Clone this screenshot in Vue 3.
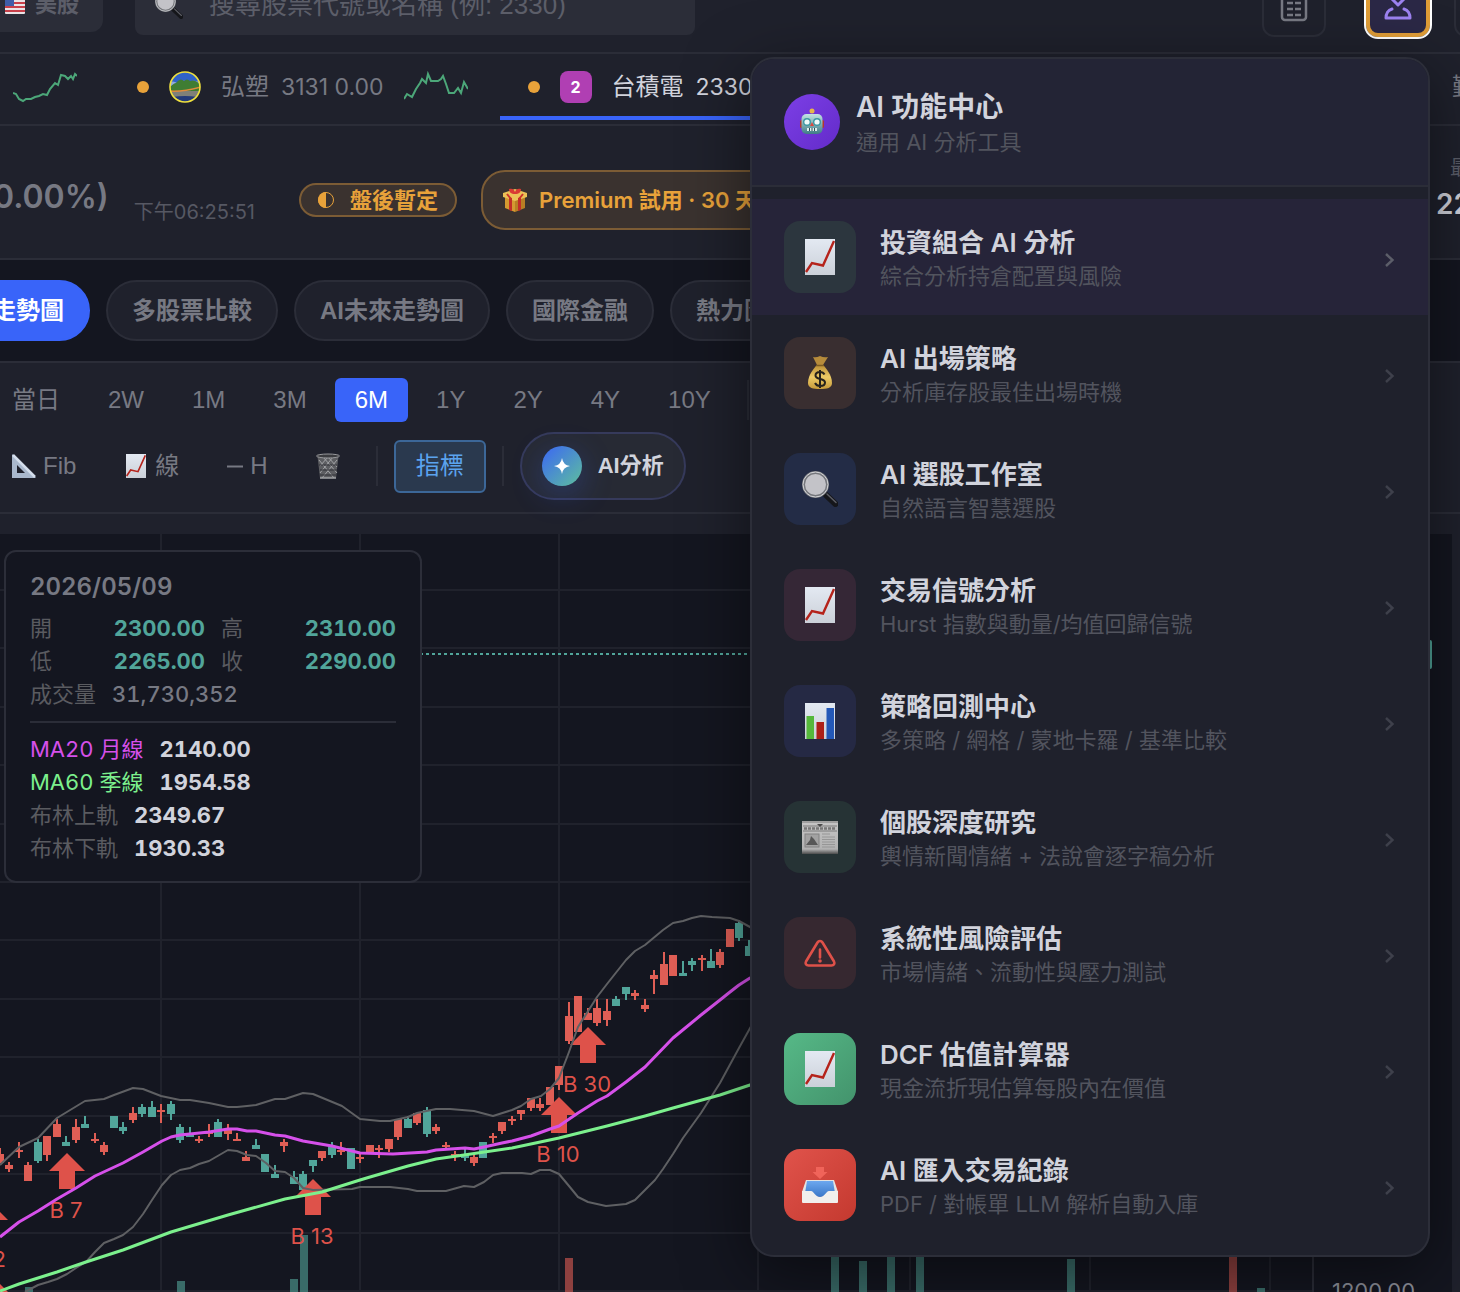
<template>
    <div class="app">
        <!-- shared icon shapes -->
        <svg class="sprite" width="0" height="0" aria-hidden="true">
            <defs>
                <linearGradient id="paper" x1="0" y1="0" x2="0" y2="1">
                    <stop offset="0" stop-color="#e3e9f2" />
                    <stop offset="1" stop-color="#cbd0d8" />
                </linearGradient>
                <linearGradient id="steel" x1="0" y1="0" x2="0" y2="1">
                    <stop offset="0" stop-color="#c3e4e4" />
                    <stop offset="1" stop-color="#3f7c86" />
                </linearGradient>
                <linearGradient id="gold" x1="0" y1="0" x2="0" y2="1">
                    <stop offset="0" stop-color="#b98d35" />
                    <stop offset="0.5" stop-color="#edcb66" />
                    <stop offset="1" stop-color="#c79a3a" />
                </linearGradient>
                <linearGradient id="news" x1="0" y1="0" x2="0" y2="1">
                    <stop offset="0" stop-color="#c6c6c6" />
                    <stop offset="0.85" stop-color="#b2b2b2" />
                    <stop offset="1" stop-color="#4c4c4c" />
                </linearGradient>
                <linearGradient id="tray" x1="0" y1="0" x2="0" y2="1">
                    <stop offset="0" stop-color="#6da8ef" />
                    <stop offset="1" stop-color="#3a77c8" />
                </linearGradient>
            </defs>
            <symbol id="i-trend" viewBox="0 0 36 36">
                <rect x="3" y="0" width="30" height="36" fill="url(#paper)" />
                <path d="M4 33 10 24 21 26.500 32 2" fill="none" stroke="#b5231b" stroke-width="2.400" />
            </symbol>
            <symbol id="i-money" viewBox="0 0 36 36">
                <path d="M11 2q3 1 7-1 4 2 8 1l-5 8h-6z" fill="#b68b3b" />
                <path d="M15 10h6c3 3 9 10 9 18 0 5-5 6-12 6S6 33 6 28c0-8 6-15 9-18z" fill="url(#gold)" />
                <path d="M14 10.500h8" stroke="#7d5c22" stroke-width="1.500" />
                <path d="M22.500 19.500c-1-2-2.500-2.500-4.500-2.500-3 0-4.500 1.500-4.500 3.500 0 4.500 9.500 2.500 9.500 7 0 2-2 3.500-5 3.500-2.500 0-4-1-5-3M18 15v18" fill="none" stroke="#26221c" stroke-width="2" />
            </symbol>
            <symbol id="i-search" viewBox="0 0 36 36">
                <path d="m24 24 9.500 9" stroke="#15161a" stroke-width="6" stroke-linecap="round" />
                <path d="m25 23 9 8.500" stroke="#5b5d64" stroke-width="1.500" stroke-linecap="round" />
                <circle cx="13.500" cy="13.500" r="12" fill="#c3c3c8" stroke="#75777c" stroke-width="3" />
                <circle cx="13.500" cy="13.500" r="12.500" fill="none" stroke="#d5d6d9" stroke-width="1" />
            </symbol>
            <symbol id="i-bars" viewBox="0 0 36 36">
                <rect x="3" y="0" width="30" height="36" fill="url(#paper)" />
                <rect x="4.500" y="13" width="7.500" height="23" fill="#55b83b" />
                <rect x="14.500" y="19" width="7.500" height="17" fill="#ad2019" />
                <rect x="24.500" y="5" width="7.500" height="31" fill="#2458b8" />
            </symbol>
            <symbol id="i-news" viewBox="0 0 36 36">
                <rect x="0" y="2" width="36" height="33" fill="url(#news)" />
                <path d="M0 3h36M1 7h34M1 12h34" stroke="#7b7b7b" />
                <path d="M2 9.500h32" stroke="#777" stroke-width="2.500" stroke-dasharray="3 1" />
                <path d="m15 5 3 3 3-3z" fill="#4a4a4a" />
                <rect x="3" y="15" width="14" height="13" fill="#a2a2a2" stroke="#828282" />
                <path d="m4 26 4-5 1-4 3 3 4 6z" fill="#575757" />
                <path d="M20 15h8M20 18h13M20 20.500h13M20 23h13M20 25.500h13M20 28h13" stroke="#969696" />
            </symbol>
            <symbol id="i-warn" viewBox="0 0 36 36">
                <path d="M15.500 7.500 4 26.500c-1.200 2.200.2 4 2.500 4h23c2.300 0 3.700-1.800 2.500-4L20.500 7.500c-1.200-2-3.800-2-5 0zM18 14.500v8" fill="none" stroke="#df5149" stroke-width="2.600" stroke-linecap="round" stroke-linejoin="round" />
                <circle cx="18" cy="26" r="1.800" fill="#df5149" />
            </symbol>
            <symbol id="i-inbox" viewBox="0 0 36 36">
                <path d="M14 0h8v5h3.500L18 12l-7.500-7H14z" fill="#f0645a" />
                <path d="M4 13h28l4 12H0z" fill="#e5e4e2" />
                <path d="M5 14h26l2 12q-15 8-30 0z" fill="url(#tray)" />
                <path d="M0 24h9c3 0 4 6 9 6s6-6 9-6h9v11q0 1-1 1H1q-1 0-1-1z" fill="#f1efed" />
            </symbol>
            <symbol id="i-robot" viewBox="0 0 28 28">
                <rect x="2" y="12" width="3" height="8" rx="1.500" fill="#b3372f" />
                <rect x="23" y="12" width="3" height="8" rx="1.500" fill="#b3372f" />
                <circle cx="14" cy="3" r="2.500" fill="#e8b64a" />
                <rect x="3.500" y="6" width="21" height="20" rx="5" fill="url(#steel)" />
                <circle cx="9" cy="14" r="3.300" fill="#eefafa" stroke="#3c98a3" stroke-width="1.400" />
                <circle cx="19" cy="14" r="3.300" fill="#eefafa" stroke="#3c98a3" stroke-width="1.400" />
                <path d="m14 14 2 4h-4z" fill="#d9483e" />
                <rect x="9" y="20" width="10" height="3" fill="#dff0ef" />
                <path d="M11.500 20v3M14 20v3M16.500 20v3" stroke="#2c4f55" />
            </symbol>
            <symbol id="i-gift" viewBox="0 0 24 24">
                <path d="m2 8 10 4v12L2 20z" fill="#d49a31" />
                <path d="m22 8-10 4v12l10-4z" fill="#b97f24" />
                <path d="m0 5 12-4 12 4v4l-12 4L0 9z" fill="#ecc157" />
                <path d="m6 9 3 1v13l-3-1zM15 10l3-1v13l-3 1z" fill="#c22e28" />
                <path d="M12 6C8 6 6 4 6 1c3-1 5 0 6 3 1-3 3-4 6-3 0 3-2 5-6 5z" fill="#d93a34" />
                <path d="M4 6l4 5M20 6l-4 5" stroke="#cb302a" stroke-width="2" />
            </symbol>
            <symbol id="i-flag" viewBox="0 0 20 18">
                <rect width="20" height="17" y="1" rx="1" fill="#e9e4e6" />
                <path d="M0 3h20M0 7h20M0 11h20M0 15h20" stroke="#c8404a" stroke-width="2" />
                <rect width="9" height="9" y="1" fill="#3f5ea8" />
            </symbol>
            <symbol id="i-ruler" viewBox="0 0 24 24">
                <path d="M0 0v24h24zM5 11v8h8z" fill="#a9b8cd" fill-rule="evenodd" />
                <path d="m1 1 22 22" stroke="#d5dfed" stroke-width="2.500" />
            </symbol>
            <symbol id="i-trash" viewBox="0 0 24 26">
                <path d="M1.500 3h21L20 25H4z" fill="#5d5e62" />
                <path d="m3 7 15 18M7 4l14 16M12 4l9 10M21 7 6 25M17 4 4 20M12 4 4 13" stroke="#a2a3a6" stroke-width="1" />
                <path d="M3 12h18M4 17h17M4 22h16" stroke="#303136" stroke-width="1" />
                <ellipse cx="12" cy="3" rx="11.500" ry="2" fill="#3b3c40" stroke="#98999c" />
                <path d="M4 25h16" stroke="#a2a3a6" stroke-width="1.500" />
            </symbol>
        </svg>

        <header class="topbar">
            <button class="market">
                <svg width="20" height="18"><use href="#i-flag" /></svg>
                美股
            </button>
            <div class="search">
                <label for="q" aria-label="搜尋"><svg width="28" height="28"><use href="#i-search" /></svg></label>
                <input id="q" type="text" placeholder="搜尋股票代號或名稱 (例: 2330)" />
            </div>
            <div class="actions">
                <button class="square" aria-label="報表">
                    <svg width="28" height="34" viewBox="0 0 28 34" fill="none" stroke="#777983">
                        <rect x="2" y="2" width="24" height="30" rx="3" stroke-width="2.500" />
                        <path d="M7 8h14" stroke-width="3" />
                        <path d="M7 15h6M15 15h6M7 21h6M15 21h6M7 27h6M15 27h6" stroke-width="2.600" />
                    </svg>
                </button>
                <button class="square ai" aria-label="AI 功能中心">
                    <svg width="30" height="34" viewBox="0 0 30 34" fill="none" stroke="#9d82f0" stroke-width="3" stroke-linecap="round" stroke-linejoin="round">
                        <path d="m15 4 6 7-6 6-6-6z" />
                        <path d="M9 21c-4 1-6 5-6 9h24c0-4-2-8-6-9" />
                    </svg>
                </button>
                <button class="square" aria-label="設定"></button>
            </div>
        </header>

        <div class="tickers">
            <div class="ticker-group">
                <a v-for="t in tickers" :key="t.id" href="#" class="ticker" :class="{ active: t.active }">
                    <template v-if="t.name">
                        <span class="dot"></span>
                        <span v-if="t.rank" class="rank">{{ t.rank }}</span>
                        <svg v-else width="32" height="32" viewBox="0 0 32 32">
                            <clipPath id="logo-clip"><circle cx="16" cy="16" r="15" /></clipPath>
                            <g clip-path="url(#logo-clip)">
                                <rect width="32" height="32" fill="#2f62c9" />
                                <path d="M0 12q4-3 8 0 6-4 12-1 6-3 12 1v3H0z" fill="#8fa9dc" />
                                <path d="M0 17q5-5 7-5 4-6 8-2 3-3 6 0 6-2 11 5v6H0z" fill="#3f7d33" />
                                <path d="M0 20h32v12H0z" fill="#7f8078" />
                                <path d="M0 20q14 1 32-4" fill="none" stroke="#e08a3b" stroke-width="1.500" />
                                <path d="M3 26q13-2 26 0v6H3z" fill="#233a78" />
                            </g>
                            <circle cx="16" cy="16" r="15" fill="none" stroke="#f0e13e" stroke-width="1.600" />
                        </svg>
                        <span class="ticker-text">{{ t.name }}<span class="quote">{{ t.quote }}</span></span>
                    </template>
                    <svg width="64" height="32" viewBox="0 0 64 32">
                        <polyline :points="t.spark" fill="none" stroke="#4ca779" stroke-width="2" />
                    </svg>
                </a>
            </div>
            <div class="ticker-next">勤誠</div>
        </div>

        <div class="quote-bar">
            <span class="change">(0.00%)</span>
            <span class="time">下午06:25:51</span>
            <span class="session">
                <svg width="16" height="16" viewBox="0 0 16 16">
                    <circle cx="8" cy="8" r="7.500" fill="none" stroke="#e8a23a" />
                    <path d="M8 0a8 8 0 0 0 0 16z" fill="#e8a23a" />
                </svg>
                盤後暫定
            </span>
            <button class="premium">
                <svg width="24" height="24"><use href="#i-gift" /></svg>
                Premium 試用 · 30 天
            </button>
            <div class="stat">
                <span class="stat-label">最高</span>
                <span class="stat-value">2290</span>
            </div>
        </div>

        <nav class="tabs">
            <button v-for="(tab, i) in tabs" :key="tab" class="tab" :class="{ active: i === 0 }">{{ tab }}</button>
        </nav>

        <div class="toolbar">
            <div class="tool-row">
                <button v-for="r in ranges" :key="r" class="tool" :class="{ active: r === '6M' }">{{ r }}</button>
                <span class="divider"></span>
            </div>
            <div class="tool-row">
                <button class="tool"><svg width="24" height="24"><use href="#i-ruler" /></svg>Fib</button>
                <button class="tool"><svg width="24" height="24"><use href="#i-trend" /></svg>線</button>
                <button class="tool"><svg width="16" height="24" viewBox="0 0 16 24"><path d="M0 12.500h16" stroke="#777983" stroke-width="2" /></svg>H</button>
                <button class="tool" aria-label="清除"><svg width="24" height="26"><use href="#i-trash" /></svg></button>
                <span class="divider"></span>
                <button class="indicator">指標</button>
                <span class="divider"></span>
                <button class="ai-pill">
                    <span class="ai-orb">
                        <svg width="16" height="16" viewBox="0 0 16 16"><path d="M8 0q1 7 8 8-7 1-8 8-1-7-8-8 7-1 8-8z" fill="#fff" /></svg>
                    </span>
                    AI分析
                </button>
            </div>
        </div>

        <main class="chart-wrap">
            <div class="chart">
                <svg class="plot" viewBox="0 0 1452 758" preserveAspectRatio="xMinYMin slice">
                    <g stroke="#20222c" stroke-width="2">
                        <line v-for="x in gridX" :key="'x' + x" :x1="x" :x2="x" y1="0" y2="758" />
                        <line v-for="y in gridY" :key="'y' + y" x1="0" x2="1313" :y1="y" :y2="y" />
                    </g>
                    <line x1="1313" x2="1313" y1="0" y2="758" stroke="#2b2d38" stroke-width="2" />

                    <rect v-for="v in volumes" :key="v[0]" :x="v[0]" :y="v[1]" width="8" :height="758 - v[1]" :fill="v[2] === 'g' ? green : red" opacity="0.6" />

                    <g v-for="c in candles" :key="c.x" :fill="c.color">
                        <rect :x="c.x - 1" :y="c.high" width="2" :height="c.low - c.high" />
                        <rect :x="c.x - 4" :y="c.top" width="8" :height="c.bottom - c.top" />
                    </g>

                    <g v-for="m in markers" :key="m.x + '-' + m.y" fill="#de524a">
                        <path :d="`M${m.x} ${m.y}l18 18h-10v18h-16v-18h-10z`" />
                        <text v-if="m.label" :x="m.x - 1" :y="m.y + 65" text-anchor="middle" class="marker">{{ m.label }}</text>
                    </g>

                    <g fill="none" stroke-linejoin="round">
                        <polyline :points="upperBand" stroke="#5f6063" stroke-width="2" />
                        <polyline :points="lowerBand" stroke="#5f6063" stroke-width="2" />
                        <polyline :points="ma60" stroke="#7cf08d" stroke-width="3" />
                        <polyline :points="ma20" stroke="#d650ea" stroke-width="3" />
                    </g>

                    <line x1="420" x2="1313" y1="120" y2="120" :stroke="green" stroke-width="2" stroke-dasharray="3 3" />
                    <rect x="1314" y="106" width="118" height="29" rx="2" :fill="green" />
                    <text x="1332" y="765" class="axis">1200.00</text>
                </svg>

                <section class="legend">
                    <div class="legend-date">2026/05/09</div>
                    <div class="ohlc">
                        <div v-for="o in ohlc" :key="o[0]" class="ohlc-cell">
                            <span class="dim">{{ o[0] }}</span>
                            <span class="up">{{ o[1] }}</span>
                        </div>
                    </div>
                    <div class="legend-row"><span class="dim">成交量</span><span class="volume">31,730,352</span></div>
                    <hr />
                    <div v-for="l in indicators" :key="l.name" class="legend-row">
                        <span :class="l.cls">{{ l.name }}</span>
                        <span class="value">{{ l.value }}</span>
                    </div>
                </section>
            </div>
        </main>

        <!-- AI menu opened from the top bar -->
        <aside class="menu">
            <div class="menu-head">
                <span class="avatar"><svg width="28" height="28"><use href="#i-robot" /></svg></span>
                <div class="item-text">
                    <div class="menu-title">AI 功能中心</div>
                    <div class="menu-sub">通用 AI 分析工具</div>
                </div>
            </div>
            <div class="menu-list">
                <button v-for="item in menu" :key="item.title" class="menu-item" :class="{ hover: item.hover }">
                    <span class="tile" :class="item.tile"><svg width="36" height="36"><use :href="'#i-' + item.icon" /></svg></span>
                    <span class="item-text">
                        <span class="item-title">{{ item.title }}</span>
                        <span class="item-sub">{{ item.sub }}</span>
                    </span>
                    <svg class="arrow" width="12" height="14" viewBox="0 0 12 14">
                        <path d="m2 1 6.500 6L2 13" fill="none" stroke="currentColor" stroke-width="2.400" />
                    </svg>
                </button>
            </div>
        </aside>
    </div>
</template>

<script setup>
import { ref } from 'vue'

const green = '#51a59a'
const red = '#df5e55'

const tickers = ref([
    { id: 1, spark: '0,22 3,23 6,28 10,30 13,28 18,28 22,26 26,25 30,23 34,24 37,18 42,12 45,14 48,4 52,5 55,8 58,5 60,8 62,3 64,5' },
    { id: 2, name: '弘塑', quote: '3131 0.00', spark: '0,28 3,23 8,26 12,18 16,12 18,8 22,12 24,3 27,10 34,10 37,8 39,5 42,13 45,22 50,22 54,17 57,22 60,11 64,18' },
    { id: 3, name: '台積電', quote: '2330 0.00', rank: 2, active: true, spark: '0,24 10,20 20,22 30,14 40,16 50,8 64,10' }
])

const tabs = ['走勢圖', '多股票比較', 'AI未來走勢圖', '國際金融', '熱力圖']
const ranges = ['當日', '2W', '1M', '3M', '6M', '1Y', '2Y', '4Y', '10Y']

const ohlc = [['開', '2300.00'], ['高', '2310.00'], ['低', '2265.00'], ['收', '2290.00']]
const indicators = [
    { name: 'MA20 月線', value: '2140.00', cls: 'ma20' },
    { name: 'MA60 季線', value: '1954.58', cls: 'ma60' },
    { name: '布林上軌', value: '2349.67', cls: 'band' },
    { name: '布林下軌', value: '1930.33', cls: 'band' }
]

const menu = ref([
    { title: '投資組合 AI 分析', sub: '綜合分析持倉配置與風險', icon: 'trend', tile: 'teal', hover: true },
    { title: 'AI 出場策略', sub: '分析庫存股最佳出場時機', icon: 'money', tile: 'brown' },
    { title: 'AI 選股工作室', sub: '自然語言智慧選股', icon: 'search', tile: 'blue' },
    { title: '交易信號分析', sub: 'Hurst 指數與動量/均值回歸信號', icon: 'trend', tile: 'pink' },
    { title: '策略回測中心', sub: '多策略 / 網格 / 蒙地卡羅 / 基準比較', icon: 'bars', tile: 'indigo' },
    { title: '個股深度研究', sub: '輿情新聞情緒 + 法說會逐字稿分析', icon: 'news', tile: 'forest' },
    { title: '系統性風險評估', sub: '市場情緒、流動性與壓力測試', icon: 'warn', tile: 'maroon' },
    { title: 'DCF 估值計算器', sub: '現金流折現估算每股內在價值', icon: 'trend', tile: 'green' },
    { title: 'AI 匯入交易紀錄', sub: 'PDF / 對帳單 LLM 解析自動入庫', icon: 'inbox', tile: 'red' }
])

const gridX = [161, 360, 559, 758, 910, 1090, 1270]
const gridY = [56, 114, 173, 231, 290, 348, 406, 465, 523, 582, 640, 699, 757]

//Candles: color, high, top, bottom, low
const rawCandles = `
r 614 620 629 629|r 628 631 635 638|r 608 616 618 624|r 628 631 647 647|g 605 608 627 629
r 602 602 621 627|r 585 590 603 603|g 602 608 612 612|r 585 593 606 609|g 582 590 594 594
r 599 605 607 609|r 608 611 618 621|g 582 582 594 594|g 588 593 597 600|r 573 579 586 589
g 570 573 580 583|g 567 573 583 583|r 570 576 578 589|g 567 570 580 586|g 590 593 606 609
g 593 600 603 603|r 602 605 607 609|r 590 597 600 603|g 585 588 603 603|r 590 595 600 606
r 599 605 607 607|r 617 623 627 627|g 605 611 615 615|g 620 620 638 638|g 631 640 644 644
r 605 608 612 618|g 637 643 650 650|g 637 640 656 656|g 626 626 632 638|r 617 617 624 627
g 608 613 621 624|r 608 616 618 621|g 614 614 635 635|r 620 623 625 629|r 611 611 618 618
r 611 614 616 624|r 605 605 615 618|r 585 585 603 606|g 582 585 594 594|r 579 579 589 591
g 573 576 600 603|r 590 593 597 600|r 608 611 613 615|r 617 620 622 627|g 615 620 624 627
r 620 623 629 632|g 608 608 624 624|r 599 602 604 609|r 588 588 597 600|r 582 585 587 591
r 576 576 580 586|r 564 564 574 577|r 564 570 574 577|r 553 553 571 571|r 532 532 551 556
r 468 482 507 510|r 462 462 498 498|r 474 479 486 486|r 465 474 489 492|r 465 477 486 492
g 462 465 472 472|g 453 453 460 466|r 456 459 462 466|r 465 471 475 478|r 436 441 445 460
r 418 430 451 451|r 421 421 442 442|g 427 439 442 442|g 424 427 431 437|r 421 424 426 437
g 415 427 434 434|r 415 418 431 434|r 395 395 413 413|g 386 389 404 407|g 406 412 422 422`

const candles = rawCandles.trim().split(/[|\n]/).map((row, i) => {
    const [color, high, top, bottom, low] = row.split(' ')
    return { x: Math.round(i * 9.48), color: color === 'g' ? green : red, high: +high, top: +top, bottom: +bottom, low: +low }
})

const volumes = [
    [25, 753, 'g'], [177, 747, 'g'], [290, 745, 'g'], [300, 701, 'g'], [565, 724, 'r'],
    [831, 715, 'g'], [859, 727, 'g'], [887, 710, 'g'], [916, 715, 'g'], [1067, 725, 'g'],
    [1229, 715, 'r'], [1257, 754, 'g']
]

const markers = [
    { x: 67, y: 619, label: 'B 7' },
    { x: 313, y: 645, label: 'B 13' },
    { x: 588, y: 493, label: 'B 30' },
    { x: 559, y: 563, label: 'B 10' },
    { x: -10, y: 668, label: 'B 2' },
    { x: -10, y: 740 }
]

const upperBand = '0,631 19,613 38,604 57,584 85,567 104,565 114,561 133,554 143,555 161,562 180,566 190,566 209,569 228,573 237,573 247,572 256,571 275,565 285,565 303,559 313,560 342,572 360,585 380,587 390,587 408,583 417,579 436,575 450,575 474,577 493,582 512,576 521,572 531,565 541,562 550,555 559,544 569,518 578,493 597,463 607,450 626,426 635,417 645,411 663,396 673,389 683,387 692,384 701,382 712,383 730,384 739,387 750,393 800,420'
const lowerBand = '25,758 38,751 48,748 57,745 67,740 76,734 86,728 95,718 104,709 114,705 123,701 133,693 143,680 152,666 162,651 171,641 180,636 190,634 199,630 209,627 228,616 237,617 247,621 256,622 266,629 275,637 285,638 294,644 303,654 313,656 352,655 360,653 390,653 408,655 417,657 446,657 464,652 474,653 484,648 493,641 502,639 522,639 531,640 540,636 550,636 559,640 569,652 578,663 588,668 606,672 626,670 635,666 645,656 655,646 663,635 673,620 683,604 701,579 720,549 739,514 749,496 780,440'
const ma20 = '0,703 19,688 38,677 57,665 76,654 95,642 123,629 143,618 162,607 171,603 180,601 209,598 228,595 237,595 247,597 256,597 275,601 285,602 303,607 332,612 360,619 393,620 427,618 436,616 465,614 474,615 484,613 502,609 512,607 531,602 550,595 559,592 578,579 597,567 607,562 626,548 645,533 673,504 701,481 720,466 730,458 739,451 750,444 800,420'
const ma60 = '0,757 19,750 57,738 86,728 123,716 171,698 228,681 285,665 322,658 360,646 370,643 408,632 436,625 464,621 512,614 559,604 607,592 645,582 673,574 720,561 750,551 800,536'
</script>

<style>
body {
    background: #1f212c;
}
</style>

<style scoped>
.app {
    position: relative;
    display: flex;
    flex-direction: column;
    min-height: 100vh;
    overflow: hidden;
    background: #1f212c;
    color: #777983;
    font-family: Inter, "Noto Sans CJK TC", sans-serif;
    font-size: 24px;
    line-height: 32px;
}

.app * {
    box-sizing: border-box;
}

.sprite {
    position: absolute;
}

svg {
    flex-shrink: 0;
    display: block;
}

button {
    display: flex;
    align-items: center;
    border: none;
    background: none;
    color: inherit;
    font-family: "Liberation Sans", "Noto Sans CJK TC", sans-serif;
    font-size: 24px;
    line-height: 32px;
    white-space: nowrap;
    flex-shrink: 0;
}

/* top bar, scrolled partly out of view */
.topbar {
    display: flex;
    align-items: center;
    height: 96px;
    margin-top: -42px;
    border-bottom: 2px solid #2b2d38;
}

.market {
    gap: 10px;
    height: 54px;
    margin-left: -19px;
    padding: 0 24px;
    border-radius: 12px;
    background: #2b2d38;
    color: #5c5e69;
    font-size: 22px;
    font-weight: 700;
}

.search {
    display: flex;
    align-items: center;
    gap: 26px;
    width: 560px;
    height: 60px;
    margin-left: 32px;
    padding: 0 20px;
    border-radius: 8px;
    background: #2b2d38;
}

.search input {
    flex: 1;
    min-width: 0;
    padding: 0;
    border: none;
    outline: none;
    background: none;
    color: #d1d3dc;
    font-family: "Liberation Sans", "Noto Sans CJK TC", sans-serif;
    font-size: 26px;
}

.search input::placeholder {
    color: #5c5e69;
}

.actions {
    display: flex;
    gap: 24px;
    margin-left: auto;
    margin-right: -58px;
}

.square {
    justify-content: center;
    width: 64px;
    height: 64px;
    padding: 0;
    border: 2px solid #2b2d38;
    border-radius: 12px;
}

.square.ai {
    margin-left: 16px;
    border: 4px solid #e09d37;
    outline: 2px solid #fff;
    background: #2b2846;
}

/* watch list */
.tickers {
    display: flex;
    justify-content: space-between;
    padding: 4px 0;
    border-bottom: 2px solid #2b2d38;
}

.ticker-group {
    display: flex;
    gap: 4px;
    margin-left: -15px;
}

.ticker {
    display: flex;
    align-items: center;
    gap: 20px;
    height: 62px;
    padding: 0 28px;
    border-bottom: 4px solid transparent;
    color: #777983;
    text-decoration: none;
    white-space: nowrap;
}

.ticker.active {
    border-color: #3964f9;
    color: #d1d3dc;
}

.dot {
    width: 12px;
    height: 12px;
    border-radius: 50%;
    background: #e8a23a;
}

.rank {
    width: 32px;
    border-radius: 8px;
    background: #b03fb3;
    color: #fff;
    font-size: 16px;
    font-weight: 700;
    line-height: 32px;
    text-align: center;
}

.ticker-text {
    display: flex;
    align-items: center;
    gap: 12px;
}

.quote {
    font-size: 23px;
}

.ticker-next {
    width: 8px;
    line-height: 58px;
    white-space: nowrap;
}

/* price line */
.quote-bar {
    display: flex;
    align-items: center;
    height: 134px;
    padding-top: 16px;
    border-bottom: 2px solid #2b2d38;
    white-space: nowrap;
}

.change {
    margin-left: -19px;
    padding-bottom: 6px;
    font-size: 32px;
    font-weight: 600;
}

.time {
    margin-left: 25px;
    padding-top: 24px;
    color: #565863;
    font-size: 20px;
}

.session {
    display: flex;
    align-items: center;
    gap: 16px;
    height: 34px;
    margin-left: 44px;
    padding: 0 17px;
    border: 2px solid #7c5c35;
    border-radius: 17px;
    background: #3a322f;
    color: #e8a23a;
    font-size: 22px;
    font-weight: 700;
}

.premium {
    gap: 12px;
    height: 60px;
    margin-left: 24px;
    padding: 0 20px;
    border: 2px solid #7c5c35;
    border-radius: 24px;
    background: #3a322f;
    color: #e8a23a;
    font-family: Inter, "Noto Sans CJK TC", sans-serif;
    font-size: 22px;
    font-weight: 600;
}

.stat {
    display: flex;
    flex-direction: column;
    width: 24px;
    margin-left: auto;
    padding-bottom: 24px;
}

.stat-label {
    padding-left: 14px;
    font-size: 20px;
    line-height: 32px;
    color: #5c5e69;
}

.stat-value {
    color: #d1d3dc;
    font-size: 28px;
    font-weight: 600;
    line-height: 40px;
}

/* view tabs */
.tabs {
    display: flex;
    gap: 16px;
    padding: 20px 0;
    border-bottom: 2px solid #2b2d38;
    background: #141620;
}

.tab {
    height: 61px;
    padding: 0 24px;
    border: 2px solid #2b2d38;
    border-radius: 31px;
    background: #1f212c;
    font-weight: 700;
}

.tab.active {
    margin-left: -34px;
    border-color: #3964f9;
    background: #3964f9;
    color: #fff;
}

/* chart toolbar */
.toolbar {
    display: flex;
    flex-direction: column;
    gap: 10px;
    padding: 15px 0 12px;
    border-bottom: 2px solid #2b2d38;
}

.tool-row {
    display: flex;
    align-items: center;
    gap: 8px;
    margin-left: -8px;
}

.tool {
    gap: 7px;
    height: 44px;
    padding: 0 20px;
    border-radius: 6px;
}

.tool.active {
    background: #3964f9;
    color: #fff;
}

.divider {
    width: 2px;
    height: 40px;
    margin: 0 8px;
    background: #2b2d38;
}

.indicator {
    height: 53px;
    padding: 0 20px;
    border: 2px solid #3c6798;
    border-radius: 6px;
    background: #2a394e;
    color: #5ba3ee;
}

.ai-pill {
    gap: 16px;
    height: 68px;
    padding: 0 20px;
    border: 2px solid #363a5b;
    border-radius: 34px;
    background: #272a34;
    color: #d1d3dc;
    font-size: 22px;
    font-weight: 700;
}

.ai-orb {
    display: grid;
    place-items: center;
    width: 40px;
    height: 40px;
    border-radius: 50%;
    background: linear-gradient(135deg, #3b66f5, #5ebf9d);
    box-shadow: 0 8px 32px rgba(57, 100, 249, 0.3);
}

/* chart */
.chart-wrap {
    display: flex;
    flex: 1;
    padding: 20px 8px 0 0;
}

.chart {
    position: relative;
    flex: 1;
    min-height: 600px;
    overflow: hidden;
    background: #141620;
}

.plot {
    position: absolute;
    inset: 0;
    width: 100%;
    height: 100%;
}

.marker {
    font-size: 22px;
}

.axis {
    fill: #8f919b;
    font-size: 22px;
}

.legend {
    position: absolute;
    top: 16px;
    left: 4px;
    width: 418px;
    padding: 20px 24px 16px;
    border: 2px solid #2c2e39;
    border-radius: 12px;
    background: #141620;
    font-size: 22px;
    line-height: 33px;
    font-variant-numeric: tabular-nums;
}

.legend-date {
    margin-bottom: 10px;
    font-size: 24px;
    font-weight: 600;
    line-height: 30px;
}

.ohlc {
    display: grid;
    grid-template-columns: 1fr 1fr;
    column-gap: 16px;
}

.ohlc-cell {
    display: flex;
    justify-content: space-between;
    height: 33px;
}

.legend-row {
    display: flex;
    gap: 16px;
    height: 33px;
}

.legend hr {
    height: 2px;
    margin: 10px 0;
    border: none;
    background: #2b2d38;
}

.dim,
.band {
    color: #5a5b60;
}

.up {
    color: #51a59a;
    font-weight: 700;
}

.volume {
    font-weight: 500;
}

.value {
    color: #d1d3dc;
    font-weight: 700;
}

.ma20 {
    color: #d650ea;
}

.ma60 {
    color: #7cf08d;
}

/* AI menu */
.menu {
    position: absolute;
    top: 57px;
    right: 30px;
    width: 680px;
    overflow: hidden;
    border: 2px solid #2c2e39;
    border-radius: 24px;
    background: #1f212c;
    box-shadow: 0 16px 64px rgba(0, 0, 0, 0.5);
}

.menu-head {
    display: flex;
    align-items: center;
    gap: 16px;
    height: 128px;
    padding: 0 32px;
    border-bottom: 2px solid #2b2d38;
    background: #232435;
}

.avatar {
    display: grid;
    place-items: center;
    width: 56px;
    height: 56px;
    border-radius: 50%;
    background: linear-gradient(135deg, #7c3fe6, #632bc9);
}

.menu-title {
    color: #d1d3dc;
    font-size: 28px;
    font-weight: 600;
    line-height: 36px;
}

.menu-sub {
    color: #52545e;
    font-size: 22px;
    line-height: 34px;
}

.menu-list {
    padding: 12px 0;
}

.menu-item {
    gap: 24px;
    width: 100%;
    height: 116px;
    padding: 0 32px;
    font-family: Inter, "Noto Sans CJK TC", sans-serif;
    text-align: left;
}

.menu-item.hover {
    background: #262439;
}

.tile {
    display: grid;
    place-items: center;
    width: 72px;
    height: 72px;
    border-radius: 16px;
}

.tile.teal { background: #2c363e; }
.tile.brown { background: #392e30; }
.tile.blue { background: #232c46; }
.tile.pink { background: #352736; }
.tile.indigo { background: #252944; }
.tile.forest { background: #263335; }
.tile.maroon { background: #362830; }
.tile.green { background: linear-gradient(135deg, #56b987, #43936c); }
.tile.red { background: linear-gradient(135deg, #e0534b, #c4392f); }

.item-text {
    display: flex;
    flex: 1;
    flex-direction: column;
    padding-top: 4px;
}

.item-title {
    color: #d1d3dc;
    font-size: 26px;
    font-weight: 600;
    line-height: 34px;
}

.item-sub {
    color: #52545e;
    font-size: 22px;
    line-height: 32px;
}

.arrow {
    margin-top: 6px;
    color: #3e404b;
}

.hover .arrow {
    color: #5c5e69;
}
</style>
